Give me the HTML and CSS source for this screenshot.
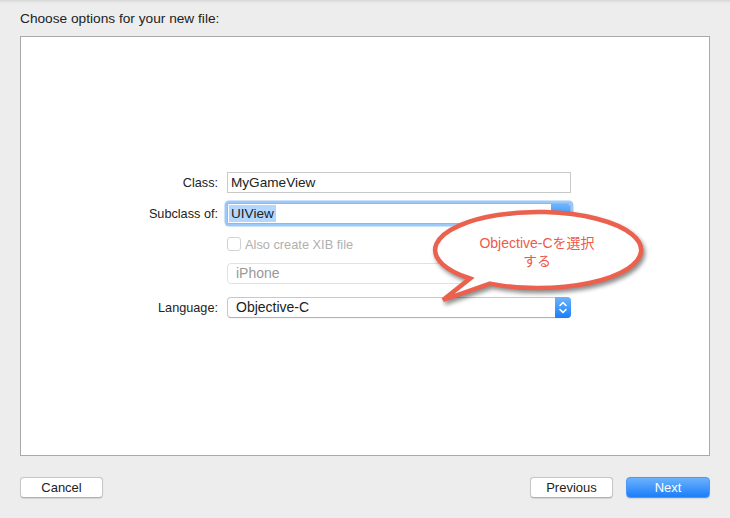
FILE: index.html
```html
<!DOCTYPE html>
<html lang="en">
<head>
<meta charset="utf-8">
<title>Choose options</title>
<link rel="stylesheet" href="styles.css">
</head>
<body>
<div class="window">
  <div class="header">Choose options for your new file:</div>
  <div class="panel">
    <div class="form">
      <div class="row r1">
        <div class="label">Class:</div>
        <div class="field text">MyGameView</div>
      </div>
      <div class="row r2">
        <div class="label">Subclass of:</div>
        <div class="field text focus"><span class="sel">UIView</span><span class="combo"></span></div>
      </div>
      <div class="row r3">
        <div class="label"></div>
        <div class="check"><span class="box"></span><span class="checklabel">Also create XIB file</span></div>
      </div>
      <div class="row r4">
        <div class="label"></div>
        <div class="field popup disabled">iPhone</div>
      </div>
      <div class="row r5">
        <div class="label">Language:</div>
        <div class="field popup">Objective-C<span class="stepper"><svg width="16" height="21" viewBox="0 0 16 21"><path d="M5 8.5 L8 5.5 L11 8.5 M5 12.5 L8 15.5 L11 12.5" fill="none" stroke="#fff" stroke-width="1.6" stroke-linecap="round" stroke-linejoin="round"/></svg></span></div>
      </div>
    </div>
  </div>
  <div class="footer">
    <button class="btn cancel">Cancel</button>
    <div class="spacer"></div>
    <button class="btn prev">Previous</button>
    <button class="btn next">Next</button>
  </div>
  <div class="callout">
    <svg class="bubble" width="240" height="115" viewBox="420 200 240 115">
      <path d="M470 278.5 A103 38 0 1 1 490 283.6 L443 300 Z" fill="#ffffff" stroke="#ec604e" stroke-width="4.5" stroke-linejoin="miter"/>
    </svg>
    <div class="callout-text">Objective-Cを選択<br>する</div>
  </div>
</div>
</body>
</html>
```
FILE: styles.css
```css
html, body {
  margin: 0;
  padding: 0;
}
body {
  width: 730px;
  height: 518px;
  overflow: hidden;
  background: #ededed;
  font-family: "Liberation Sans", "Noto Sans CJK JP", sans-serif;
  font-size: 13px;
  color: #222;
}
.window {
  position: relative;
  width: 730px;
  height: 518px;
  background: linear-gradient(#d6d6d6 0px, #e6e6e6 2px, #ededed 4px, #ededed 100%);
}
.header {
  box-sizing: border-box;
  height: 36px;
  padding: 11px 20px 0;
  line-height: 16px;
  font-size: 13.7px;
  color: #222;
}
.panel {
  box-sizing: border-box;
  margin: 0 20px;
  height: 420px;
  border: 1px solid #a9a9a9;
  background: #fff;
  padding-top: 135px;
}
.form {
  display: flex;
  flex-direction: column;
}
.row {
  display: flex;
  align-items: center;
  gap: 9px;
}
.r1 { height: 21px; }
.r2 { height: 21px; margin-top: 10px; }
.r3 { height: 20px; margin-top: 10px; }
.r4 { height: 21px; margin-top: 9px; }
.r5 { height: 21px; margin-top: 13px; }
.label {
  width: 197px;
  text-align: right;
  font-size: 12.7px;
  color: #222;
}
.field {
  box-sizing: border-box;
  width: 344px;
  height: 21px;
  line-height: 19px;
  position: relative;
}
.text {
  border: 1px solid #c9c9c9;
  padding-left: 3px;
  font-size: 13.6px;
  background: #fff;
}
.focus {
  border-color: #8ab9f2;
  box-shadow: 0 0 0 2.5px #9cc8fa;
  border-radius: 2px;
  padding-left: 1px;
}
.sel {
  background: #b3d7ff;
  padding: 0 2px 0 2px;
  display: inline-block;
  line-height: 17px;
  margin-top: 1px;
}
.combo {
  position: absolute;
  right: 0;
  top: 0;
  width: 19px;
  height: 19px;
  background: linear-gradient(#6cb4fd, #2e8cfb);
  border-radius: 0 2px 2px 0;
}
.check {
  display: flex;
  align-items: center;
  gap: 4px;
}
.box {
  box-sizing: border-box;
  width: 14px;
  height: 14px;
  border: 1px solid #d2d2d2;
  border-radius: 3px;
  background: #fff;
}
.checklabel {
  color: #b0b0b0;
  font-size: 12.8px;
}
.popup {
  border: 1px solid #c8c8c8;
  border-bottom-color: #b3b3b3;
  border-radius: 4px;
  padding-left: 8px;
  font-size: 14px;
  background: #fff;
  box-shadow: 0 0.5px 0.5px rgba(0,0,0,0.08);
}
.disabled {
  border-color: #e2e2e2;
  color: #999;
  box-shadow: none;
}
.stepper {
  position: absolute;
  right: -1px;
  top: -1px;
  width: 16px;
  height: 21px;
  background: linear-gradient(#6db4fc, #1a80fa);
  border-radius: 0 4px 4px 0;
}
.stepper svg {
  display: block;
}
.footer {
  display: flex;
  align-items: center;
  gap: 13px;
  padding: 21px 20px 0;
}
.spacer {
  flex: 1;
}
.btn {
  box-sizing: border-box;
  height: 21px;
  border: 1px solid #c6c6c6;
  border-bottom-color: #b0b0b0;
  border-radius: 4px;
  background: #fff;
  font-family: "Liberation Sans", sans-serif;
  font-size: 13px;
  color: #222;
  padding: 0;
  line-height: 19px;
  box-shadow: 0 0.5px 1px rgba(0,0,0,0.1);
}
.cancel { width: 83px; }
.prev { width: 83px; }
.next {
  width: 84px;
  color: #fff;
  border-color: #4a9af8;
  background: linear-gradient(#6bb2fd, #1b7ef9);
}
.callout {
  position: absolute;
  left: 420px;
  top: 200px;
  width: 240px;
  height: 115px;
}
.bubble {
  display: block;
  filter: drop-shadow(2px 3px 2px rgba(0,0,0,0.45));
}
.callout-text {
  position: absolute;
  left: 17px;
  top: 34px;
  width: 200px;
  text-align: center;
  color: #ee5a4a;
  font-size: 14px;
  line-height: 18px;
}
```
